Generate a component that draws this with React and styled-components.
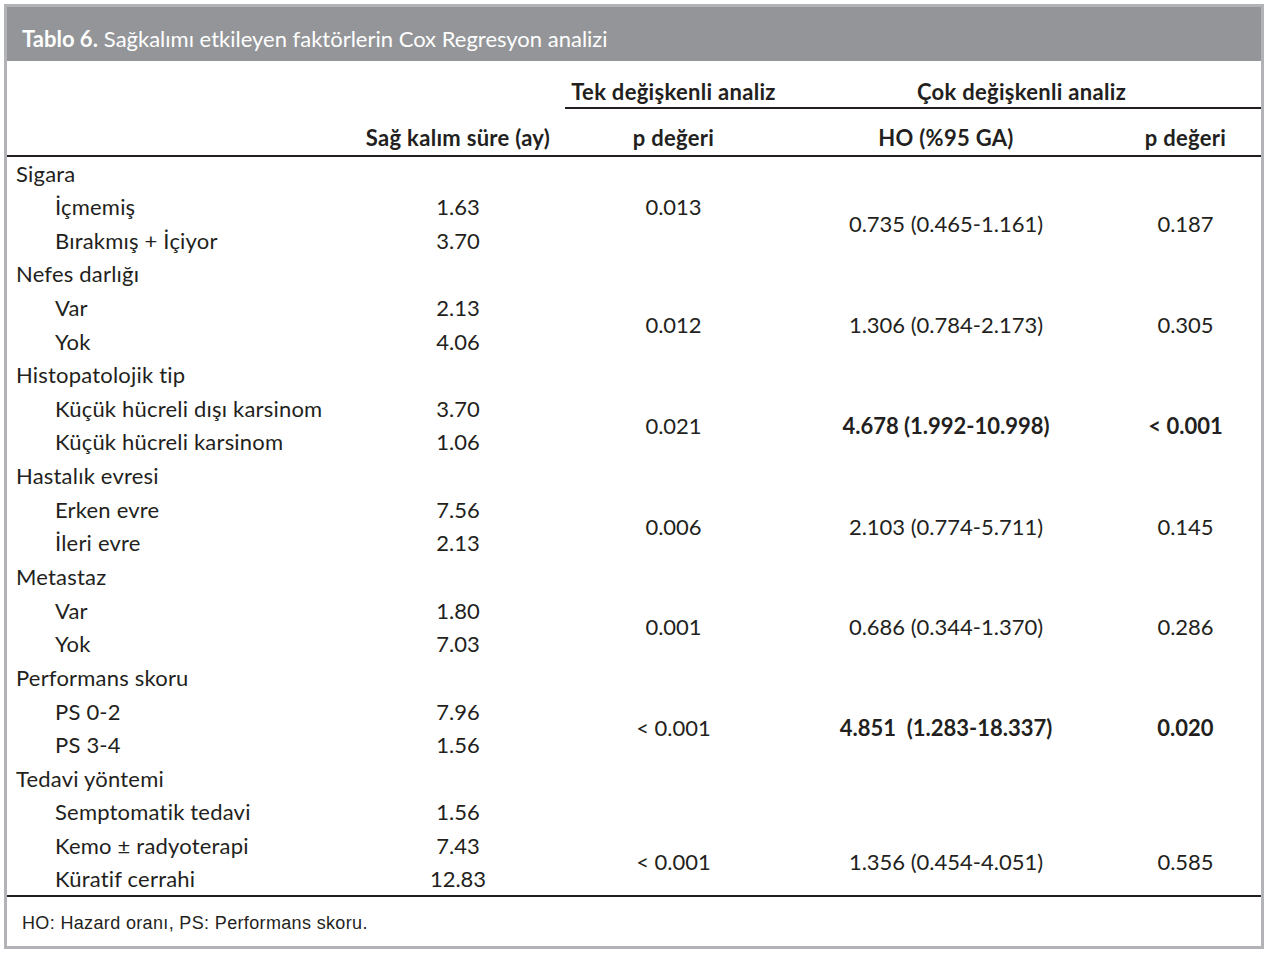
import styled, { createGlobalStyle } from 'styled-components';

const groups = [
  {
    title: 'Sigara',
    items: [['İçmemiş', '1.63'], ['Bırakmış + İçiyor', '3.70']],
    start: 0,
    tekSpan: 1,
    tek: '0.013',
    ho: '0.735 (0.465-1.161)',
    p: '0.187',
  },
  {
    title: 'Nefes darlığı',
    items: [['Var', '2.13'], ['Yok', '4.06']],
    start: 0,
    tekSpan: 2,
    tek: '0.012',
    ho: '1.306 (0.784-2.173)',
    p: '0.305',
  },
  {
    title: 'Histopatolojik tip',
    items: [['Küçük hücreli dışı karsinom', '3.70'], ['Küçük hücreli karsinom', '1.06']],
    start: 0,
    tekSpan: 2,
    tek: '0.021',
    ho: '4.678 (1.992-10.998)',
    p: '< 0.001',
    bold: true,
  },
  {
    title: 'Hastalık evresi',
    items: [['Erken evre', '7.56'], ['İleri evre', '2.13']],
    start: 0,
    tekSpan: 2,
    tek: '0.006',
    ho: '2.103 (0.774-5.711)',
    p: '0.145',
  },
  {
    title: 'Metastaz',
    items: [['Var', '1.80'], ['Yok', '7.03']],
    start: 0,
    tekSpan: 2,
    tek: '0.001',
    ho: '0.686 (0.344-1.370)',
    p: '0.286',
  },
  {
    title: 'Performans skoru',
    items: [['PS 0-2', '7.96'], ['PS 3-4', '1.56']],
    start: 0,
    tekSpan: 2,
    tek: '< 0.001',
    ho: '4.851  (1.283-18.337)',
    p: '0.020',
    bold: true,
  },
  {
    title: 'Tedavi yöntemi',
    items: [['Semptomatik tedavi', '1.56'], ['Kemo ± radyoterapi', '7.43'], ['Küratif cerrahi', '12.83']],
    start: 1,
    tekSpan: 2,
    tek: '< 0.001',
    ho: '1.356 (0.454-4.051)',
    p: '0.585',
  },
];

const GlobalStyle = createGlobalStyle`
  body {
    margin: 0;
    background: #ffffff;
    font-family: 'Lato', 'Open Sans', sans-serif;
    font-variant-ligatures: none;
    color: #231f20;
  }
`;

const Frame = styled.div`
  margin: 4px 0 0 4px;
  width: 1254px;
  border: 3px solid #b1b3b6;
  background: #fff;
`;

const TitleBar = styled.div`
  height: 54px;
  box-sizing: border-box;
  padding: 9px 0 0 15px;
  display: flex;
  align-items: center;
  background: #939598;
  color: #fff;
  font-size: 22px;
`;

const TitleStrong = styled.strong`
  font-weight: 700;
  margin-right: 6px;
`;

const Table = styled.table`
  width: 1254px;
  border-collapse: collapse;
  table-layout: fixed;
  font-size: 22px;
`;

const HeadCell = styled.th`
  height: ${(p) => p.$h}px;
  padding: 0 0 ${(p) => p.$pb}px ${(p) => (p.$shift ? 8 : 0)}px;
  vertical-align: bottom;
  text-align: center;
  font-weight: 700;
  letter-spacing: 0.3px;
  white-space: nowrap;
`;

const GroupHead = styled.div`
  margin-left: ${(p) => p.$indent}px;
  padding-bottom: 2px;
  border-bottom: 2px solid #231f20;
`;

const SubHeadRow = styled.tr`
  border-bottom: 2px solid #231f20;
`;

const BodyRow = styled.tr`
  height: 33.65px;
`;

const Label = styled.td`
  padding: 0 0 0 ${(p) => (p.$sub ? 48 : 9)}px;
  white-space: nowrap;
  vertical-align: middle;
  letter-spacing: 0.2px;
`;

const Cell = styled.td`
  padding: 0 0 0 ${(p) => (p.$shift ? 8 : 0)}px;
  text-align: center;
  vertical-align: middle;
  white-space: pre;
  font-weight: ${(p) => (p.$bold ? 700 : 400)};
`;

const BodyGroup = styled.tbody`
  border-bottom: 2px solid #231f20;
`;

const Footer = styled.div`
  height: 49px;
  box-sizing: border-box;
  padding: 3px 0 0 15px;
  display: flex;
  align-items: center;
  font-family: 'Liberation Sans', Arial, sans-serif;
  font-size: 18px;
  letter-spacing: 0.35px;
`;

const GroupRows = ({ g }) => {
  const rows = [
    <BodyRow key="t">
      <Label>{g.title}</Label>
      <Cell />
      <Cell $shift />
      <Cell />
      <Cell />
    </BodyRow>,
  ];
  g.items.forEach(([name, val], i) => {
    let stats = null;
    if (i === g.start) {
      stats = (
        <>
          <Cell $shift rowSpan={g.tekSpan}>{g.tek}</Cell>
          <Cell rowSpan={2} $bold={g.bold}>{g.ho}</Cell>
          <Cell rowSpan={2} $bold={g.bold}>{g.p}</Cell>
        </>
      );
    } else if (i === g.start + 1 && g.tekSpan === 1) {
      stats = <Cell $shift />;
    } else if (i < g.start) {
      stats = (
        <>
          <Cell $shift />
          <Cell />
          <Cell />
        </>
      );
    }
    rows.push(
      <BodyRow key={name}>
        <Label $sub>{name}</Label>
        <Cell>{val}</Cell>
        {stats}
      </BodyRow>
    );
  });
  return rows;
};

const App = () => (
  <>
    <GlobalStyle />
    <Frame>
      <TitleBar>
        <TitleStrong>Tablo 6.</TitleStrong> Sağkalımı etkileyen faktörlerin Cox Regresyon analizi
      </TitleBar>
      <Table>
        <colgroup>
          <col style={{ width: 352 }} />
          <col style={{ width: 198 }} />
          <col style={{ width: 225 }} />
          <col style={{ width: 328 }} />
          <col style={{ width: 151 }} />
        </colgroup>
        <thead>
          <tr>
            <HeadCell $h={48} $pb={0} />
            <HeadCell $h={48} $pb={0} />
            <HeadCell $h={48} $pb={0}>
              <GroupHead $indent={8}>Tek değişkenli analiz</GroupHead>
            </HeadCell>
            <HeadCell $h={48} $pb={0} colSpan={2}>
              <GroupHead $indent={0}>Çok değişkenli analiz</GroupHead>
            </HeadCell>
          </tr>
          <SubHeadRow>
            <HeadCell $h={42} $pb={4} />
            <HeadCell $h={42} $pb={4}>Sağ kalım süre (ay)</HeadCell>
            <HeadCell $h={42} $pb={4} $shift>p değeri</HeadCell>
            <HeadCell $h={42} $pb={4}>HO (%95 GA)</HeadCell>
            <HeadCell $h={42} $pb={4}>p değeri</HeadCell>
          </SubHeadRow>
        </thead>
        <BodyGroup>
          {groups.map((g) => (
            <GroupRows key={g.title} g={g} />
          ))}
        </BodyGroup>
      </Table>
      <Footer>HO: Hazard oranı, PS: Performans skoru.</Footer>
    </Frame>
  </>
);

export default App;
